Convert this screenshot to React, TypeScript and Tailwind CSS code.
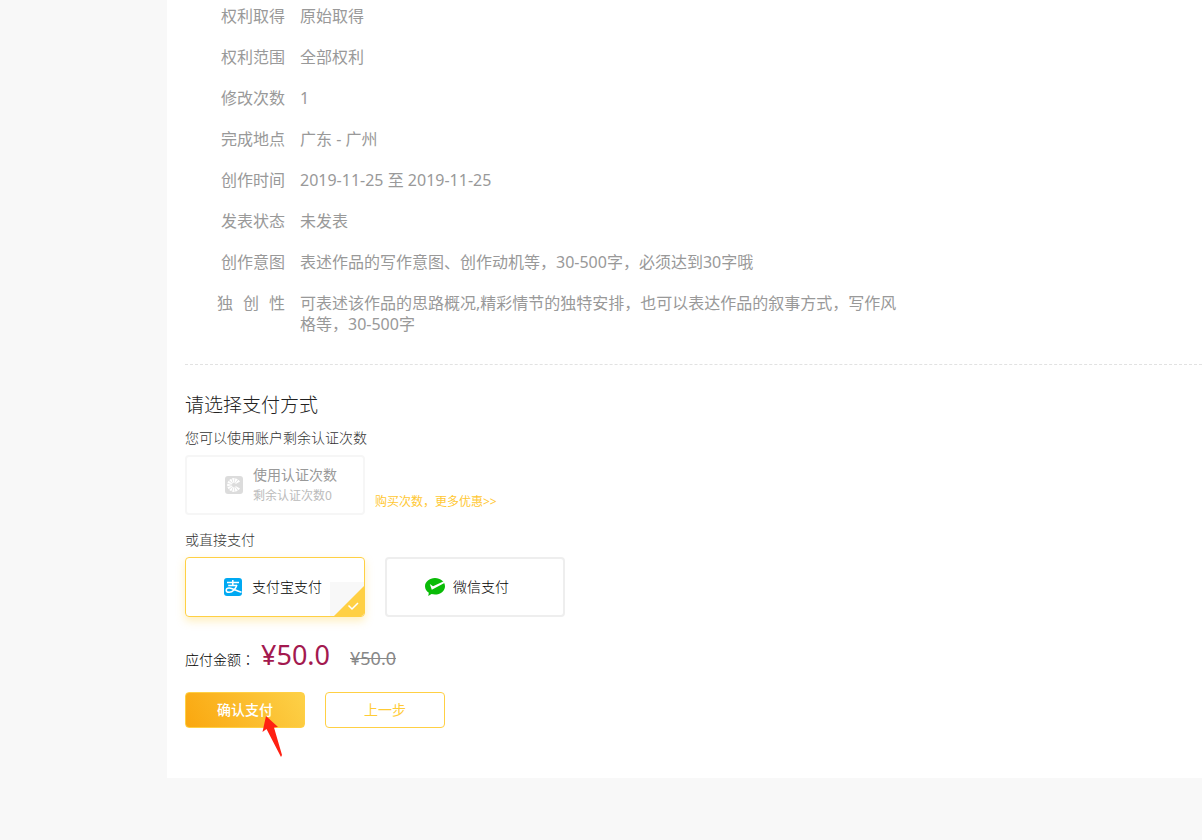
import type { ReactNode } from "react";
import { useState } from "react";

type Detail = { label: ReactNode; value: string };

const details: Detail[] = [
  { label: "权利取得", value: "原始取得" },
  { label: "权利范围", value: "全部权利" },
  { label: "修改次数", value: "1" },
  { label: "完成地点", value: "广东 - 广州" },
  { label: "创作时间", value: "2019-11-25 至 2019-11-25" },
  { label: "发表状态", value: "未发表" },
  { label: "创作意图", value: "表述作品的写作意图、创作动机等，30-500字，必须达到30字哦" },
  {
    label: (
      <span className="flex justify-end gap-2.5">
        <span>独</span> <span>创</span> <span>性</span>
      </span>
    ),
    value: "可表述该作品的思路概况,精彩情节的独特安排，也可以表达作品的叙事方式，写作风格等，30-500字",
  },
];

const rays = [40, 68, 96, 124, 152, 180, 208, 236, 264, 292, 320];

function CreditsIcon() {
  return (
    <svg className="size-[18px] shrink-0" viewBox="0 0 18 18" aria-hidden="true">
      <rect width="18" height="18" rx="3" fill="#dcdcdc" />
      <g fill="#ffffff">
        {rays.map((a) => (
          <path key={a} d="M11 8.7 15.8 7.7V10.3L11 9.3Z" transform={`rotate(${a} 9 9)`} />
        ))}
      </g>
    </svg>
  );
}

function AlipayIcon() {
  return (
    <svg className="size-[18px] shrink-0" viewBox="0 0 18 18" aria-hidden="true">
      <rect width="18" height="18" rx="3" fill="#00a9f2" />
      <g fill="none" stroke="#ffffff" strokeWidth="1.5">
        <path d="M8.8 2V7.5M3 4.6H15M4.2 7.5H13" />
        <path d="M12.9 7C11.8 10.5 8.8 14.3 5.2 14.3 3.1 14.3 2.2 13.3 2.2 12.2 2.2 10.8 3.5 10 5.2 10 8.5 10 11.5 12.6 17.5 14.2" />
      </g>
    </svg>
  );
}

function WechatPayIcon() {
  return (
    <svg className="h-[18px] w-5 shrink-0" viewBox="0 0 20 18" aria-hidden="true">
      <path
        d="M10 0C4.5 0 0 3.7 0 8.3c0 2.7 1.5 5 3.8 6.5L3.3 18l3.2-1.9c1.1.3 2.3.5 3.5.5 5.5 0 10-3.7 10-8.3S15.5 0 10 0Z"
        fill="#09bb07"
      />
      <path d="M4.8 6 6.8 11.7 19.4 4.9 18.3 3.5 8 8.3Z" fill="#ffffff" />
    </svg>
  );
}

function SelectedCorner() {
  return (
    <svg className="absolute right-0 bottom-0 h-[34px] w-[34px] rounded-br-[3px]" viewBox="0 0 34 34" aria-hidden="true">
      <rect width="34" height="34" fill="#f8f8f8" />
      <path d="M34 4V34H4Z" fill="#ffd044" />
      <path d="M18.5 23.5l3.5 3.5 6-6" fill="none" stroke="#ffffff" strokeWidth="1.5" />
    </svg>
  );
}

function PayOption({
  name,
  icon,
  checked,
  onSelect,
}: {
  name: string;
  icon: ReactNode;
  checked: boolean;
  onSelect: () => void;
}) {
  return (
    <label
      className={
        checked
          ? "relative flex h-[60px] w-[180px] cursor-pointer items-center gap-2.5 rounded border border-[#ffd044] pl-[38px] text-sm text-black shadow-[0_4px_8px_rgba(255,208,68,0.35)]"
          : "relative flex h-[60px] w-[180px] cursor-pointer items-center gap-2 rounded border-2 border-[#eeeeee] pl-[38px] text-sm text-black"
      }
    >
      <input type="radio" name="payment" className="sr-only" checked={checked} onChange={onSelect} />
      {icon}
      <span className="font-light">{name}</span>
      {checked && <SelectedCorner />}
    </label>
  );
}

export default function App() {
  const [method, setMethod] = useState("alipay");
  return (
    <div className="min-h-screen bg-[#f8f8f8] pl-[167px] font-['Noto_Sans','Noto_Sans_CJK_SC',sans-serif]">
      <main className="bg-white pt-1.5 pb-[50px] pl-[18px]">
        <dl className="flex flex-col gap-5 text-base leading-[21px] text-[#999999]">
          {details.map((d) => (
            <div key={d.value} className="flex gap-[15px]">
              <dt className="w-[100px] shrink-0 text-right">{d.label}</dt>
              <dd className="max-w-[600px]">{d.value}</dd>
            </div>
          ))}
        </dl>

        <hr className="mt-[29px] border-t border-dashed border-[#e2e2e2]" />

        <section className="mt-[26px]">
          <h2 className="text-[19px] leading-7 font-light text-[#222222]">请选择支付方式</h2>
          <p className="mt-[9px] text-sm leading-5 font-light text-[#333333]">您可以使用账户剩余认证次数</p>
          <div className="mt-[7px] flex items-end gap-2.5">
            <button
              type="button"
              disabled
              className="flex h-[60px] w-[180px] items-center gap-2.5 rounded border-2 border-[#f6f6f6] pl-[38px] text-left"
            >
              <CreditsIcon />
              <span className="flex flex-col">
                <span className="text-sm leading-[22px] text-[#999999]">使用认证次数</span>
                <span className="text-xs leading-5 text-[#bbbbbb]">剩余认证次数0</span>
              </span>
            </button>
            <a href="#buy" className="mb-[3px] text-xs leading-5 text-[#ffc833]">
              购买次数，更多优惠&gt;&gt;
            </a>
          </div>

          <p className="mt-[15px] text-sm leading-5 font-light text-[#333333]">或直接支付</p>
          <div className="mt-[7px] flex gap-5">
            <PayOption
              name="支付宝支付"
              icon={<AlipayIcon />}
              checked={method === "alipay"}
              onSelect={() => setMethod("alipay")}
            />
            <PayOption
              name="微信支付"
              icon={<WechatPayIcon />}
              checked={method === "wechat"}
              onSelect={() => setMethod("wechat")}
            />
          </div>

          <p className="mt-5 flex h-9 items-baseline font-['Noto_Sans','Noto_Sans_CJK_JP',sans-serif] leading-9">
            <span lang="ja" className="text-sm font-light text-black">应付金额：</span>
            <span className="ml-1.5 text-[27px] text-[#a3194f]">¥50.0</span>
            <del className="ml-5 text-lg leading-9 text-[#888888]">¥50.0</del>
          </p>

          <div className="mt-[19px] flex gap-5">
            <div className="relative">
              <button
                type="button"
                className="h-9 w-[120px] rounded border border-[#ffd044] bg-linear-[60deg] from-[#faa70f] to-[#fdd148] text-sm font-medium text-white"
              >
                确认支付
              </button>
              <svg className="absolute top-6 left-[77px] h-[41px] w-5" viewBox="0 0 20 41" aria-hidden="true">
                <path d="M4 0 16 11 12 11.5 20 39 19 41 4.5 13 .5 16Z" fill="#ff2012" />
              </svg>
            </div>
            <button type="button" className="h-9 w-[120px] rounded border border-[#ffd044] bg-white text-sm text-[#ffcb35]">
              上一步
            </button>
          </div>
        </section>
      </main>
    </div>
  );
}
